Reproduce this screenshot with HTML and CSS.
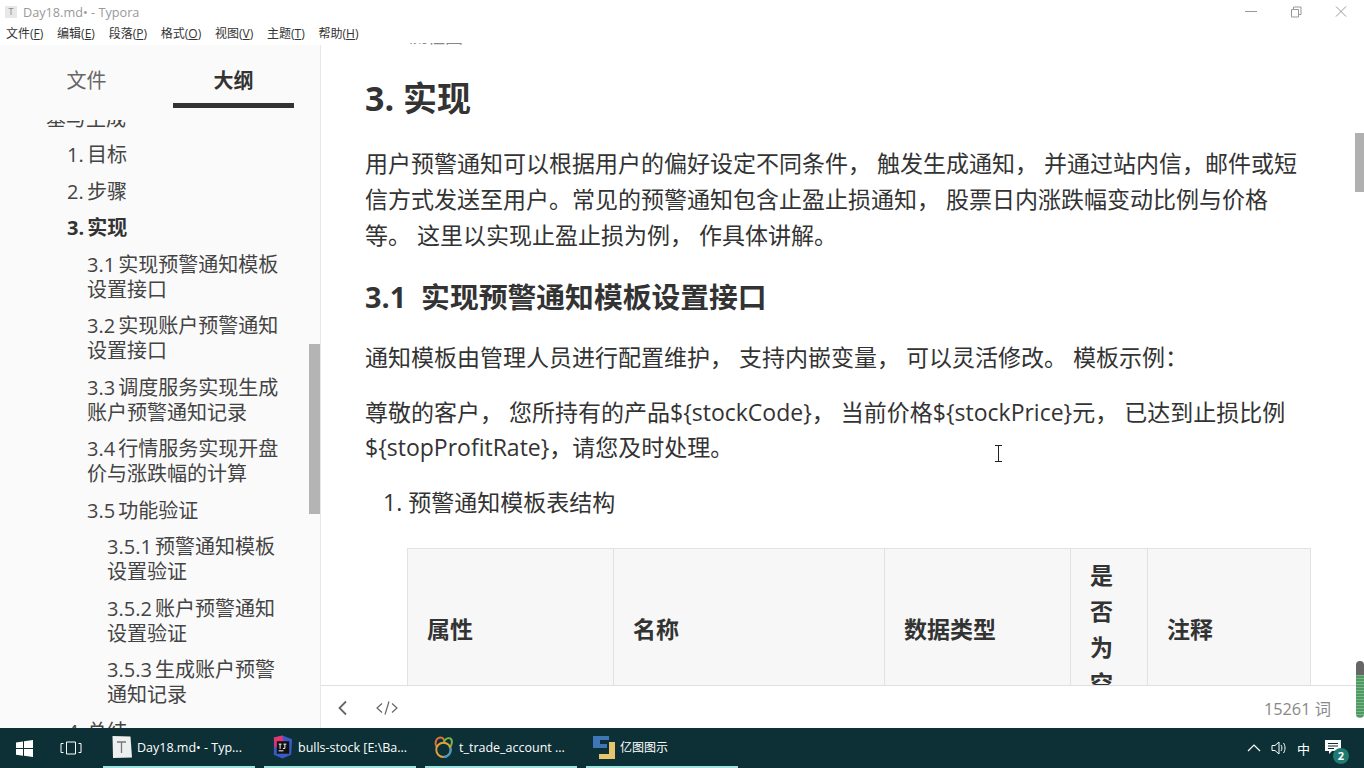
FILE: index.html
```html
<!DOCTYPE html>
<html lang="zh-CN">
<head>
    <meta charset="UTF-8">
    <title>Day18.md• - Typora</title>
    <link rel="stylesheet" href="styles.css">
</head>
<body>
    <div class="window">
        <div class="titlebar">
            <div class="app-icon">T</div>
            <div class="title">Day18.md• - Typora</div>
            <div class="win-buttons">
                <svg width="12" height="12" viewBox="0 0 12 12"><path d="M0 5.500h12" stroke="#999" fill="none"/></svg>
                <svg width="12" height="12" viewBox="0 0 12 12"><path d="M1.500 3.500h7v7.500h-7zM3.500 3v-2h7.500v7.500h-2.500" stroke="#999" fill="none"/></svg>
                <svg width="12" height="12" viewBox="0 0 12 12"><path d="M1 .5l10 10M11 .5l-10 10" stroke="#999" fill="none"/></svg>
            </div>
        </div>
        <div class="menubar">
            <span>文件(<u>F</u>)</span>
            <span>编辑(<u>E</u>)</span>
            <span>段落(<u>P</u>)</span>
            <span>格式(<u>O</u>)</span>
            <span>视图(<u>V</u>)</span>
            <span>主题(<u>T</u>)</span>
            <span>帮助(<u>H</u>)</span>
        </div>

        <div class="main">
            <div class="sidebar">
                <div class="tabs">
                    <div class="tab">文件</div>
                    <div class="tab active">大纲</div>
                </div>
                <div class="outline">
                    <div class="outline-inner">
                        <div class="item lv0">基与生成</div>
                        <div class="item lv1">1. 目标</div>
                        <div class="item lv1">2. 步骤</div>
                        <div class="item lv1 current">3. 实现</div>
                        <div class="item lv2">3.1 实现预警通知模板设置接口</div>
                        <div class="item lv2">3.2 实现账户预警通知设置接口</div>
                        <div class="item lv2">3.3 调度服务实现生成账户预警通知记录</div>
                        <div class="item lv2">3.4 行情服务实现开盘价与涨跌幅的计算</div>
                        <div class="item lv2">3.5 功能验证</div>
                        <div class="item lv3">3.5.1 预警通知模板设置验证</div>
                        <div class="item lv3">3.5.2 账户预警通知设置验证</div>
                        <div class="item lv3">3.5.3 生成账户预警通知记录</div>
                        <div class="item lv1">4. 总结</div>
                    </div>
                    <div class="side-scroll"></div>
                </div>
            </div>

            <div class="editor">
                <div class="doc">
                    <div class="peek"><span>流程图</span></div>
                    <h2>3. 实现</h2>
                    <p class="intro">用户预警通知可以根据用户的偏好设定不同条件， 触发生成通知， 并通过站内信，邮件或短信方式发送至用户。常见的预警通知包含止盈止损通知， 股票日内涨跌幅变动比例与价格等。 这里以实现止盈止损为例， 作具体讲解。</p>
                    <h3>3.1&nbsp; 实现预警通知模板设置接口</h3>
                    <p class="one">通知模板由管理人员进行配置维护， 支持内嵌变量， 可以灵活修改。 模板示例：</p>
                    <p class="two">尊敬的客户， 您所持有的产品${stockCode}， 当前价格${stockPrice}元， 已达到止损比例${stopProfitRate}，请您及时处理。</p>
                    <div class="list-item">1. 预警通知模板表结构</div>
                    <table>
                        <tr>
                            <th class="c1">属性</th>
                            <th class="c2">名称</th>
                            <th class="c3">数据类型</th>
                            <th class="c4">是否为空</th>
                            <th class="c5">注释</th>
                        </tr>
                    </table>
                </div>
                <div class="cursor"></div>
                <div class="doc-scroll"></div>
                <div class="minimap"></div>
                <div class="footer">
                    <svg width="12" height="16" viewBox="0 0 12 16"><path d="M9 1.500l-6.500 6.500 6.500 6.500" stroke="#666" stroke-width="1.800" fill="none"/></svg>
                    <svg class="code" width="22" height="14" viewBox="0 0 22 14"><path d="M6 2.500l-5 4.500 5 4.500M16 2.500l5 4.500-5 4.500M13 .5l-4 13" stroke="#666" stroke-width="1.200" fill="none"/></svg>
                    <div class="count">15261 词</div>
                </div>
            </div>
        </div>

        <div class="taskbar">
            <div class="start">
                <svg width="17" height="17" viewBox="0 0 17 17"><path d="M0 2.400l7-1v6.700h-7zM8 1.300l9-1.300v8.100h-9zM0 9h7v6.700l-7-1zM8 9h9v8l-9-1.300z" fill="#fff"/></svg>
            </div>
            <div class="taskview">
                <svg width="22" height="14" viewBox="0 0 22 14"><path d="M6.500 1h9v12h-9zM3.500 2.500h-2.500v9h2.500M18.500 2.500h2.500v9h-2.500" stroke="#fff" fill="none"/></svg>
            </div>
            <div class="task">
                <svg width="23" height="24" viewBox="0 0 22 24"><path d="M2 1l18 .5 1.500 21-19 .5z" fill="#eef0ef"/><path d="M6.500 7h9M11 7v11" stroke="#777" stroke-width="1.300" fill="none"/></svg>
                <span>Day18.md• - Typ...</span>
            </div>
            <div class="task">
                <svg width="23" height="26" viewBox="0 0 24 26"><path d="M3 3l9-2 10 4-1 16-9 4-9-4z" fill="#3a5bc7"/><path d="M3 3l9-2 1 8-9 5z" fill="#e8336e"/><path d="M6 7h13v13h-13z" fill="#111"/><path d="M8 10h3M9.500 10v5M13 10h3M14.500 10v4.500h-2M8 17h5" stroke="#fff" fill="none"/></svg>
                <span>bulls-stock [E:\Ba...</span>
            </div>
            <div class="task">
                <svg width="23" height="24" viewBox="0 0 24 24"><path d="M5 12c-3-5 0-10 4-10 3 0 4 3 4 6" stroke="#e0703c" stroke-width="2" fill="none"/><path d="M12 8c1-4 4-6 7-5 3 2 2 7-1 10" stroke="#7ab648" stroke-width="2" fill="none"/><circle cx="12" cy="15" r="7.500" stroke="#e0a03c" stroke-width="2" fill="none"/><path d="M12 22.500a7.500 7.500 0 0 0 7-10" stroke="#3d9ad1" stroke-width="2" fill="none"/></svg>
                <span>t_trade_account ...</span>
            </div>
            <div class="task short">
                <svg width="23" height="24" viewBox="0 0 23 24"><path d="M0 1h16v4h-9v4h7v4h-14z" fill="#3f76b8"/><path d="M16 7h6v17h-16v-5h10z" fill="#e6c56d"/></svg>
                <span class="cn">亿图图示</span>
            </div>
            <div class="tray">
                <svg width="14" height="8" viewBox="0 0 14 8"><path d="M1 7l6-6 6 6" stroke="#fff" stroke-width="1.200" fill="none"/></svg>
                <svg width="16" height="14" viewBox="0 0 16 14"><path d="M1 4.500h3l4-3.500v12l-4-3.500h-3zM10 4c1.200 1.800 1.200 4.200 0 6M12.500 2c2 3 2 7 0 10" stroke="#fff" fill="none"/></svg>
                <span class="ime">中</span>
                <div class="notice">
                    <svg width="16" height="15" viewBox="0 0 16 15"><path d="M0 0h16v11h-9l-3 3v-3h-4z" fill="#fff"/><path d="M3 3.500h10M3 6h10M3 8.500h6" stroke="#0c3036" fill="none"/></svg>
                    <div class="badge">2</div>
                </div>
            </div>
        </div>
    </div>
</body>
</html>
```

FILE: styles.css
```css
* {
    box-sizing: border-box;
}
html, body {
    margin: 0;
    height: 100%;
    overflow: hidden;
}
body {
    font-family: "Open Sans", "Noto Sans CJK SC", sans-serif;
    color: #333;
    background: #fff;
}
.window {
    width: 1364px;
    height: 768px;
    display: flex;
    flex-direction: column;
}

/* title + menu */
.titlebar {
    height: 23px;
    flex: none;
    display: flex;
    align-items: center;
    padding-left: 5px;
}
.app-icon {
    width: 12px;
    height: 12px;
    background: #e8e8e8;
    color: #888;
    font-size: 9px;
    line-height: 12px;
    text-align: center;
}
.title {
    margin-left: 6px;
    font-size: 12.7px;
    color: #999;
}
.win-buttons {
    margin-left: auto;
    display: flex;
    gap: 33px;
    padding-right: 17px;
}
.menubar {
    height: 22px;
    flex: none;
    display: flex;
    gap: 13.8px;
    padding-left: 6px;
    font-size: 12px;
    line-height: 21px;
    color: #333;
}
.menubar u {
    text-underline-offset: 1px;
}

.main {
    flex: 1;
    min-height: 0;
    display: flex;
}

/* sidebar */
.sidebar {
    width: 321px;
    flex: none;
    display: flex;
    flex-direction: column;
    background: #fafafa;
    border-right: 1px solid #e8e8e8;
}
.tabs {
    height: 75px;
    flex: none;
    display: flex;
    gap: 26px;
    padding-left: 26px;
}
.tab {
    width: 121px;
    height: 63px;
    text-align: center;
    font-size: 20px;
    line-height: 72px;
    color: #666;
}
.tab.active {
    font-weight: 700;
    color: #333;
    border-bottom: 5px solid #333;
}
.outline {
    flex: 1;
    min-height: 0;
    position: relative;
    overflow: hidden;
}
.outline-inner {
    margin-top: -20px;
    font-size: 20px;
    line-height: 25px;
    color: #444;
    word-spacing: -2px;
}
.item {
    padding: 5.75px 36px 5.75px 0;
}
.lv0 { padding-left: 46px; }
.lv1 { padding-left: 67px; }
.lv2 { padding-left: 87px; }
.lv3 { padding-left: 107px; }
.current {
    font-weight: 700;
    color: #333;
}
.side-scroll {
    position: absolute;
    right: 0;
    top: 224px;
    width: 11px;
    height: 170px;
    background: #b4b4b4;
}

/* editor */
.editor {
    flex: 1;
    min-width: 0;
    margin-top: -3px;
    position: relative;
    overflow: hidden;
}
.doc {
    height: 643px;
    overflow: hidden;
    padding: 0 53px 0 44px;
    font-size: 23px;
    line-height: 36px;
    color: #333;
}
.peek {
    height: 2px;
    margin: 1px 0 0 44px;
    overflow: hidden;
    display: flex;
    align-items: flex-end;
    font-size: 18px;
    line-height: 17px;
    color: #888;
}
.doc h2 {
    margin: 30px 0 0;
    font-size: 34px;
    line-height: 46px;
    font-weight: 700;
}
.doc p {
    margin: 0;
}
.doc .intro {
    margin-top: 24px;
}
.doc h3 {
    margin: 26px 0 0;
    font-size: 28.8px;
    line-height: 36px;
    font-weight: 700;
}
.doc .one {
    margin-top: 24px;
}
.doc .two {
    margin-top: 20px;
    line-height: 35px;
}
.list-item {
    margin-top: 19px;
    padding-left: 18px;
}
.doc table {
    margin: 28px 0 0 42px;
    width: 904px;
    border-collapse: collapse;
    table-layout: fixed;
}
.doc th {
    background: #f7f7f7;
    border: 1px solid #e2e2e2;
    padding: 8px 19px;
    font-weight: 700;
    text-align: left;
}
.c1 { width: 206px; }
.c2 { width: 271px; }
.c3 { width: 186px; }
.c4 { width: 77px; }
.cursor {
    position: absolute;
    left: 674px;
    top: 403px;
    width: 7px;
    height: 17px;
    border-top: 1px solid #222;
    border-bottom: 1px solid #222;
    background: linear-gradient(#222, #222) center / 1px 100% no-repeat;
}
.doc-scroll {
    position: absolute;
    right: 0;
    top: 91px;
    width: 9px;
    height: 59px;
    background: #b0b0b0;
}
.minimap {
    position: absolute;
    right: 0;
    top: 619px;
    width: 8px;
    height: 57px;
    border-radius: 4px;
    background: linear-gradient(#666 0 14px, transparent 14px), repeating-linear-gradient(#4f9a62 0 2px, #7db58a 2px 3px);
}
.footer {
    height: 43px;
    display: flex;
    align-items: center;
    padding: 2px 33px 0 16px;
    border-top: 1px solid #e0e0e0;
}
.footer .code {
    margin-left: 27px;
}
.count {
    margin-left: auto;
    font-size: 16.3px;
    color: #888;
}

/* taskbar */
.taskbar {
    height: 40px;
    flex: none;
    display: flex;
    align-items: center;
    background: #0c3036;
    color: #fff;
}
.start {
    width: 48px;
    display: flex;
    justify-content: center;
}
.taskview {
    width: 46px;
    display: flex;
    justify-content: center;
}
.task {
    width: 152px;
    height: 40px;
    margin-left: 9px;
    padding: 0 6px 0 7px;
    display: flex;
    align-items: center;
    gap: 4px;
    font-size: 12.5px;
    white-space: nowrap;
    border-bottom: 2px solid #9fe3df;
}
.task .cn {
    font-size: 12px;
}
.tray {
    margin-left: auto;
    display: flex;
    align-items: center;
    gap: 10px;
    padding-right: 19px;
}
.ime {
    font-size: 13px;
}
.notice {
    position: relative;
    margin-left: 5px;
    width: 20px;
    height: 20px;
}
.badge {
    position: absolute;
    right: -4px;
    bottom: -6px;
    width: 16px;
    height: 16px;
    border-radius: 50%;
    background: #1f7a72;
    font-size: 11px;
    font-weight: 700;
    line-height: 16px;
    text-align: center;
}
```
